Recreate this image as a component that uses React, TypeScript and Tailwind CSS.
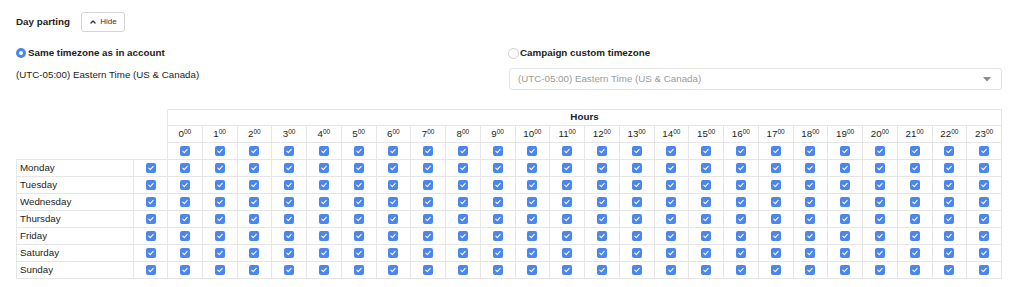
import { ChevronUp } from "lucide-react";

const HOURS = Array.from({ length: 24 }, (_, i) => i);
const DAYS = ["Monday", "Tuesday", "Wednesday", "Thursday", "Friday", "Saturday", "Sunday"];

function Check() {
  return (
    <span className="inline-flex h-[10px] w-[10px] items-center justify-center rounded-[2px] bg-[#4a86ee] align-middle">
      <svg width="8" height="8" viewBox="0 0 8 8" fill="none">
        <path d="M1.8 4.2 L3.3 5.6 L6.2 2.3" stroke="white" strokeWidth="1.1" strokeLinecap="round" strokeLinejoin="round" />
      </svg>
    </span>
  );
}

function Radio({ on }: { on?: boolean }) {
  if (on)
    return (
      <span className="inline-flex h-[10px] w-[10px] items-center justify-center rounded-full bg-[#4a86ee]">
        <span className="h-[4px] w-[4px] rounded-full bg-white" />
      </span>
    );
  return <span className="inline-block h-[11px] w-[11px] rounded-full border border-[#cfcfcf] bg-white" />;
}

export default function App() {
  const cell = "border border-[#e6e6e6] p-0 text-center";
  return (
    <div className="h-[287px] w-[1018px] bg-white pl-4 pt-3 text-[#222]" style={{ fontFamily: '"Liberation Sans", Arial, sans-serif' }}>
      <div className="flex h-5 items-center gap-[11px]">
        <span className="text-[9.8px] font-bold">Day parting</span>
        <button className="flex h-5 w-11 items-center justify-center gap-[3px] rounded-[3px] border border-[#d4d4d4] bg-white text-[8px] text-[#333]">
          <ChevronUp size={8} strokeWidth={4} />
          Hide
        </button>
      </div>

      <div className="mt-[15px] flex">
        <div className="w-[492px]">
          <div className="flex h-3 items-center gap-[2px]">
            <Radio on />
            <span className="text-[9.8px] font-bold">Same timezone as in account</span>
          </div>
          <div className="mt-[10px] text-[9.75px] leading-3">(UTC-05:00) Eastern Time (US &amp; Canada)</div>
        </div>
        <div className="w-[494px]">
          <div className="flex h-3 items-center gap-[1px]">
            <Radio />
            <span className="text-[9.8px] font-bold">Campaign custom timezone</span>
          </div>
          <div className="ml-[1px] mt-[9px] flex h-[22px] items-center justify-between rounded-[3px] border border-[#e3e3e3] pl-2 pr-[10px] text-[9.75px] text-[#9a9a9a]">
            <span>(UTC-05:00) Eastern Time (US &amp; Canada)</span>
            <svg width="8" height="5" viewBox="0 0 8 5">
              <path d="M0 0 L8 0 L4 4.5 Z" fill="#8a8a8a" />
            </svg>
          </div>
        </div>
      </div>

      <table className="mt-[19px] w-[986px] table-fixed border-collapse text-[9.75px]">
        <colgroup>
          <col className="w-[117px]" />
          <col className="w-[34px]" />
          {HOURS.map((h) => (
            <col key={h} />
          ))}
        </colgroup>
        <tbody>
          <tr className="h-4">
            <td colSpan={2} rowSpan={3} className="p-0" />
            <td colSpan={24} className={`${cell} text-[9.8px] font-bold`}>
              Hours
            </td>
          </tr>
          <tr className="h-[17px]">
            {HOURS.map((h) => (
              <td key={h} className={`${cell} text-[9.75px] leading-none text-[#222]`}>
                {h}
                <sup className="text-[6.5px] text-[#222]">00</sup>
              </td>
            ))}
          </tr>
          <tr className="h-[17px]">
            {HOURS.map((h) => (
              <td key={h} className={cell}>
                <Check />
              </td>
            ))}
          </tr>
          {DAYS.map((d, di) => (
            <tr key={d} className="h-[17px]">
              <td className={`${cell} pl-[3px] text-left`}>{d}</td>
              <td className={cell}>
                <Check />
              </td>
              {HOURS.map((h) => (
                <td
                  key={h}
                  className={`${cell} ${h === 0 ? "border-l-[#555]" : ""} ${di === 0 ? "border-t-[#999]" : ""}`}
                >
                  <Check />
                </td>
              ))}
            </tr>
          ))}
        </tbody>
      </table>
    </div>
  );
}
